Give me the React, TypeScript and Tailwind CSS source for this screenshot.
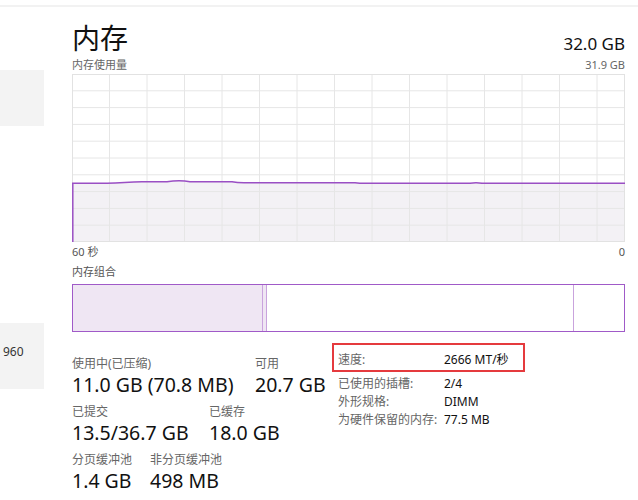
import React from "react";

const font = { fontFamily: '"Noto Sans", "Noto Sans CJK SC", sans-serif' };

function Chart() {
  const w = 553;
  const h = 168;
  const vx = Array.from({ length: 14 }, (_, i) => 37.5 * (i + 1));
  const hy = Array.from({ length: 9 }, (_, i) => 16.8 * (i + 1));
  const line =
    "M0,109.3 H35 C50,109.3 55,107.7 70,107.7 H95 Q101,106.7 107,106.7 Q113,106.7 118,107.7 H160 Q165,108.7 172,108.7 H283 Q288,109.3 292,109.3 H398 Q404,108.3 410,109.3 H553";
  return (
    <svg width={w} height={h} viewBox={`0 0 ${w} ${h}`} className="block">
      <rect x={0} y={0} width={w} height={h} fill="#ffffff" />
      <path d={`${line} V168 H0 Z`} fill="#f3f1f5" />
      {vx.map((x) => (
        <line key={"v" + x} x1={x} y1={0} x2={x} y2={h} stroke="#e6e6e6" strokeWidth={1} />
      ))}
      {hy.map((y) => (
        <line key={"h" + y} x1={0} y1={y} x2={w} y2={y} stroke="#e6e6e6" strokeWidth={1} />
      ))}
      <rect x={0.5} y={0.5} width={w - 1} height={h - 1} fill="none" stroke="#e2e2e2" strokeWidth={1} />
      <path d={`M0.8,168 V109.3`} stroke="#9a4fc4" strokeWidth={1.5} fill="none" />
      <path d={line} stroke="#9a4fc4" strokeWidth={1.5} fill="none" />
    </svg>
  );
}

function CompositionBar() {
  return (
    <div className="relative flex h-[48px] w-[553px] border-[1.5px] border-[#a05ac8] bg-white">
      <div className="w-[189px] bg-[#efe6f3]" />
      <div className="w-[1px] bg-[#c9a3dd]" />
      <div className="w-[3px] bg-[#efe6f3]" />
      <div className="w-[1px] bg-[#c9a3dd]" />
      <div className="w-[306px]" />
      <div className="w-[1px] bg-[#c9a3dd]" />
      <div className="flex-1" />
    </div>
  );
}

function Stat({ label, value, className = "" }: { label: string; value: string; className?: string }) {
  return (
    <div className={"flex flex-col " + className}>
      <div className="text-[12px] leading-[16px] text-[#666]">{label}</div>
      <div className="text-[19.5px] leading-[26px] text-[#111]">{value}</div>
    </div>
  );
}

export default function App() {
  return (
    <div className="relative h-[500px] w-[638px] overflow-hidden bg-white" style={font}>
      <div className="h-[5px]" />
      <div className="h-[2px] w-full bg-[#f2f2f2]" />
      <div className="flex">
        {/* sidebar */}
        <div className="flex w-[44px] flex-col">
          <div className="mt-[63px] h-[56px] bg-[#f3f3f3]" />
          <div className="mt-[197px] h-[66px] bg-[#f3f3f3] pl-[3px] pt-[22px] text-[12px] leading-[14px] text-[#333]">960</div>
        </div>
        {/* main */}
        <div className="ml-[28px] flex w-[553px] flex-col">
          <div className="mt-[11px] flex items-end justify-between">
            <div className="text-[28px] leading-[40px] text-[#111]">内存</div>
            <div className="mb-[3px] text-[17px] leading-[22px] text-[#111]">32.0 GB</div>
          </div>
          <div className="flex justify-between text-[11px] leading-[14px] text-[#666]">
            <span>内存使用量</span>
            <span>31.9 GB</span>
          </div>
          <div className="mt-[2px]">
            <Chart />
          </div>
          <div className="mt-[3px] flex justify-between text-[11px] leading-[14px] text-[#555]">
            <span>60 秒</span>
            <span>0</span>
          </div>
          <div className="mt-[6px] text-[11px] leading-[14px] text-[#555]">内存组合</div>
          <div className="mt-[5px]">
            <CompositionBar />
          </div>
          <div className="flex">
            <div className="mt-[24px] flex w-[260px] flex-col gap-[6px]">
              <div className="flex">
                <Stat label="使用中(已压缩)" value="11.0 GB (70.8 MB)" className="w-[183px]" />
                <Stat label="可用" value="20.7 GB" />
              </div>
              <div className="flex">
                <Stat label="已提交" value="13.5/36.7 GB" className="w-[137px]" />
                <Stat label="已缓存" value="18.0 GB" />
              </div>
              <div className="flex">
                <Stat label="分页缓冲池" value="1.4 GB" className="w-[78px]" />
                <Stat label="非分页缓冲池" value="498 MB" />
              </div>
            </div>
            <div className="mt-[11px] flex flex-col text-[12px] text-[#111]">
              <div className="flex h-[29px] w-[193px] items-end border-2 border-[#e53a3e] pb-[1px] pl-[4px]">
                <span className="w-[106px] text-[#666]">速度:</span>
                <span>2666 MT/秒</span>
              </div>
              <div className="flex flex-col pl-[6px] pt-[3px] leading-[18px]">
                <div className="flex">
                  <span className="w-[106px] text-[#666]">已使用的插槽:</span>
                  <span>2/4</span>
                </div>
                <div className="flex">
                  <span className="w-[106px] text-[#666]">外形规格:</span>
                  <span>DIMM</span>
                </div>
                <div className="flex">
                  <span className="w-[106px] text-[#666]">为硬件保留的内存:</span>
                  <span>77.5 MB</span>
                </div>
              </div>
            </div>
          </div>
        </div>
      </div>
    </div>
  );
}
